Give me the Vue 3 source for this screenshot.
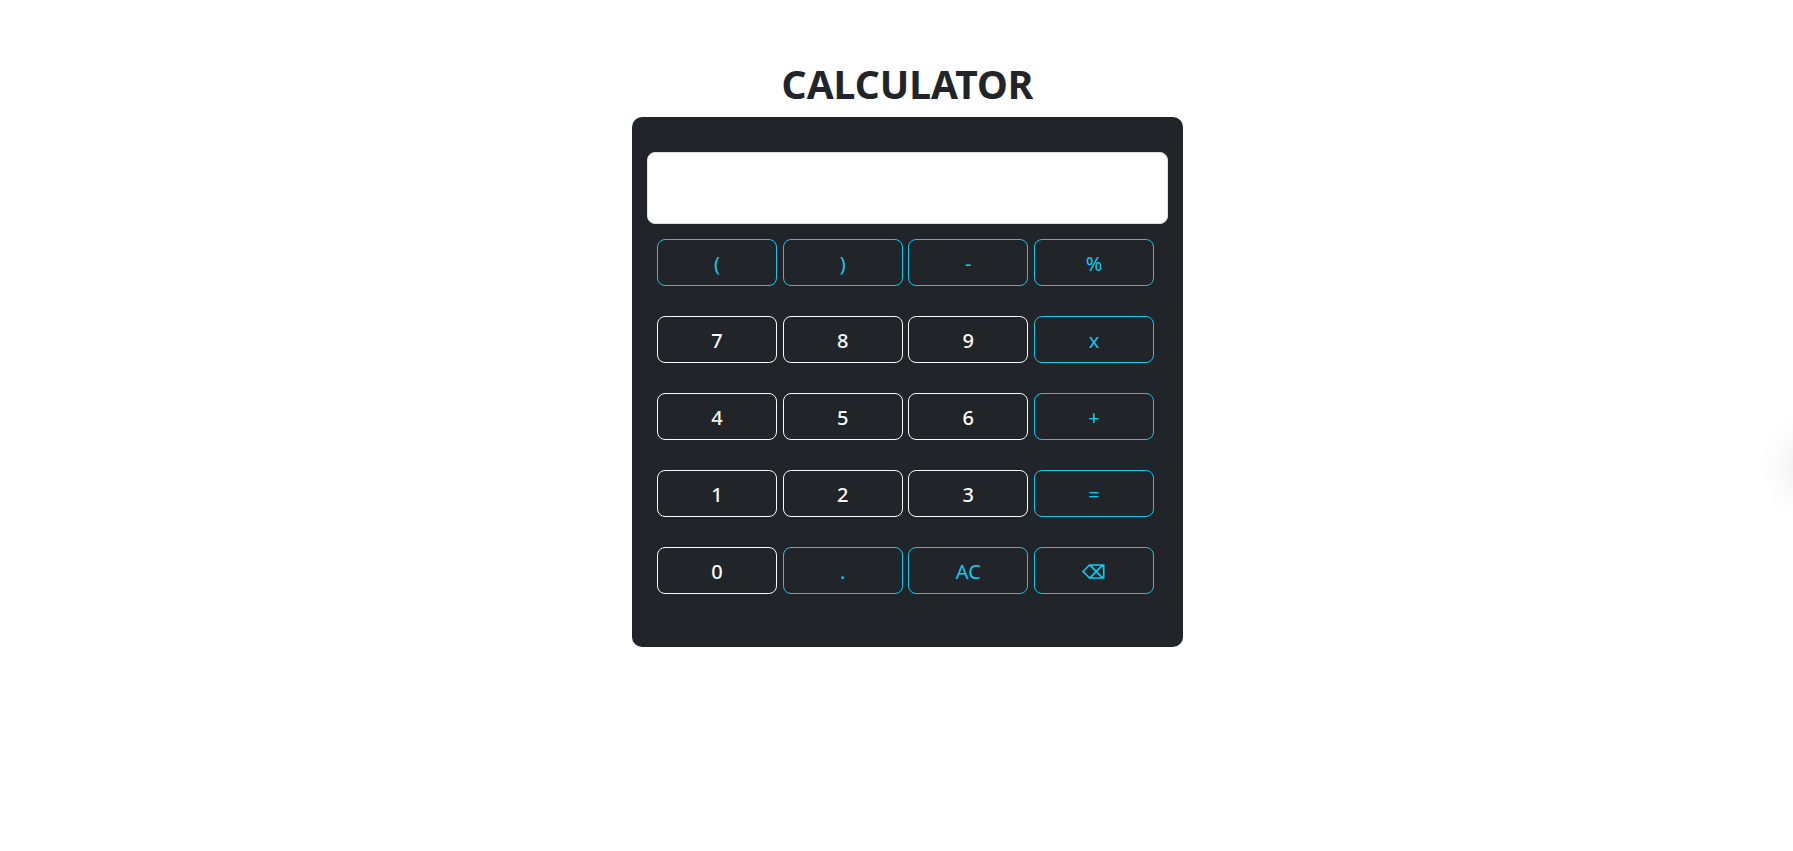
<script setup>
import { ref } from 'vue'

const expression = ref('')

const keys = [
  { label: '(' }, { label: ')' }, { label: '-' }, { label: '%' },
  { label: '7', digit: true }, { label: '8', digit: true }, { label: '9', digit: true }, { label: 'x' },
  { label: '4', digit: true }, { label: '5', digit: true }, { label: '6', digit: true }, { label: '+' },
  { label: '1', digit: true }, { label: '2', digit: true }, { label: '3', digit: true }, { label: '=' },
  { label: '0', digit: true }, { label: '.' }, { label: 'AC' }, { label: 'Backspace', icon: true },
]

function evaluate(source) {
  const tokens = source.match(/\d*\.?\d+|[-+x%()]/g) || []
  let i = 0
  const factor = () => {
    const token = tokens[i++]
    if (token === '-') return -factor()
    if (token === '(') {
      const value = sum()
      i++
      return value
    }
    return Number(token)
  }
  const product = () => {
    let value = factor()
    while (tokens[i] === 'x' || tokens[i] === '%') {
      value = tokens[i++] === 'x' ? value * factor() : value % factor()
    }
    return value
  }
  const sum = () => {
    let value = product()
    while (tokens[i] === '+' || tokens[i] === '-') {
      value = tokens[i++] === '+' ? value + product() : value - product()
    }
    return value
  }
  return String(sum())
}

function press(label) {
  if (label === 'AC') expression.value = ''
  else if (label === 'Backspace') expression.value = expression.value.slice(0, -1)
  else if (label === '=') expression.value = expression.value ? evaluate(expression.value) : ''
  else expression.value += label
}
</script>

<template>
  <main class="page">
    <h1 class="title">CALCULATOR</h1>
    <section class="calculator">
      <input v-model="expression" class="display" type="text" aria-label="Result" />
      <div class="keys">
        <button
          v-for="key in keys"
          :key="key.label"
          type="button"
          class="key"
          :class="{ digit: key.digit }"
          :aria-label="key.label"
          @click="press(key.label)"
        >
          <svg v-if="key.icon" class="icon" viewBox="0 0 23 15" aria-hidden="true">
            <path d="M1 7.5 7.5 1H21.7V14H7.5ZM8 1.2 20.5 13.8M8 13.8 20.5 1.2" />
          </svg>
          <template v-else>{{ key.label }}</template>
        </button>
      </div>
    </section>
    <div class="edge-glow"></div>
  </main>
</template>

<style>
body {
  margin: 0;
  background: #fff;
}
</style>

<style scoped>
.page {
  display: flex;
  flex-direction: column;
  align-items: center;
  padding: 60px 0 24px 22px;
  font-family: "Segoe UI", "Noto Sans", "Liberation Sans", sans-serif;
  color: #212529;
}

.title {
  margin: 0 0 9px;
  font-size: 39px;
  font-weight: 700;
  line-height: 48px;
}

.calculator {
  box-sizing: border-box;
  width: 100%;
  max-width: 551px;
  padding: 35px 15px 53px;
  border-radius: 10px;
  background: #212529;
}

.display {
  display: block;
  box-sizing: border-box;
  width: 100%;
  height: 72px;
  padding: 8px 16px;
  border: 1px solid #dee2e6;
  border-radius: 8px;
  background: #fff;
  color: #212529;
  font: inherit;
  font-size: 20px;
}

.keys {
  display: grid;
  grid-template-columns: repeat(4, 120px);
  justify-content: space-between;
  row-gap: 30px;
  padding: 15px 14px 0 10px;
}

.key {
  display: flex;
  align-items: center;
  justify-content: center;
  box-sizing: border-box;
  height: 47px;
  padding: 2px 0 0;
  border: 1px solid #0dcaf0;
  border-radius: 8px;
  background: transparent;
  color: #0dcaf0;
  font: inherit;
  font-size: 20px;
  line-height: 30px;
  cursor: pointer;
}

.key.digit {
  border-color: #f8f9fa;
  color: #f8f9fa;
  font-weight: 500;
}

.icon {
  width: 23px;
  height: 15px;
  fill: none;
  stroke: currentColor;
  stroke-width: 1.7;
}

.edge-glow {
  position: fixed;
  top: 440px;
  right: -52px;
  width: 52px;
  height: 52px;
  border-radius: 50%;
  box-shadow: 0 0 40px rgba(0, 0, 0, 0.13);
  pointer-events: none;
}
</style>
